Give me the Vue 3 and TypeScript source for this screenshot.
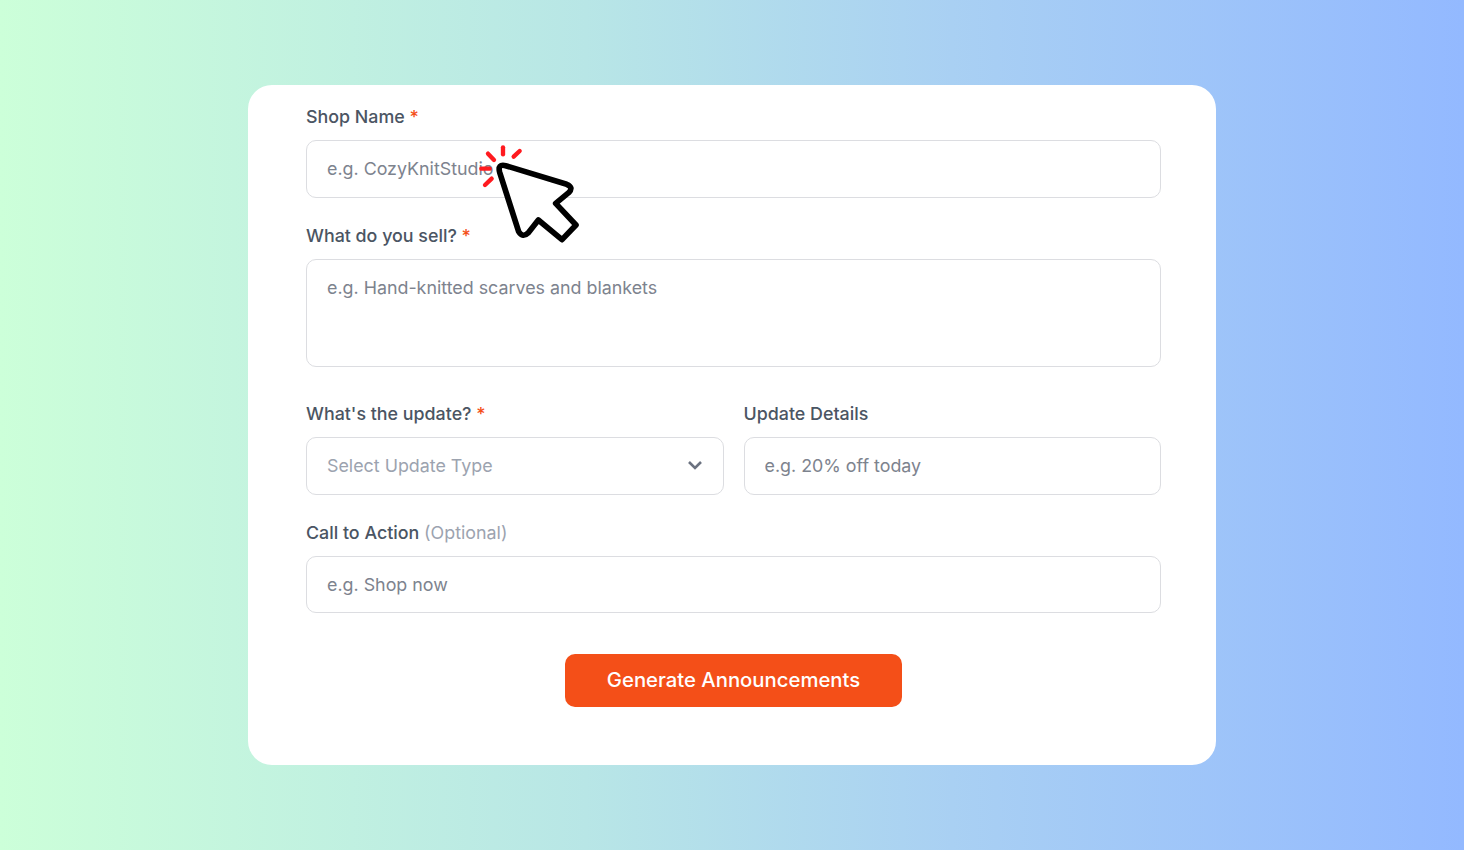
<script setup lang="ts">
const rays: [number, number, number, number][] = [
  [99, 37, 99, 58],
  [54, 56, 72, 75],
  [131, 65, 149, 48],
  [34, 101, 59, 101],
  [45, 150, 65, 131],
];
</script>

<template>
  <main class="page">
    <form class="card" @submit.prevent>
      <div class="field">
        <label class="label" for="shop">Shop Name <span class="req">*</span></label>
        <input id="shop" class="control shop" type="text" placeholder="e.g. CozyKnitStudio" />
      </div>
      <div class="field">
        <label class="label" for="sell">What do you sell? <span class="req">*</span></label>
        <textarea id="sell" class="control area" placeholder="e.g. Hand-knitted scarves and blankets"></textarea>
      </div>
      <div class="row">
        <div class="field">
          <label class="label" for="type">What's the update? <span class="req">*</span></label>
          <div class="select-wrap">
            <select id="type" class="control select">
              <option>Select Update Type</option>
            </select>
            <svg class="chevron" viewBox="0 0 16 10" aria-hidden="true">
              <path d="M2 2l6 6 6-6" />
            </svg>
          </div>
        </div>
        <div class="field">
          <label class="label" for="details">Update Details</label>
          <input id="details" class="control" type="text" placeholder="e.g. 20% off today" />
        </div>
      </div>
      <div class="field">
        <label class="label" for="cta">Call to Action <span class="optional">(Optional)</span></label>
        <input id="cta" class="control" type="text" placeholder="e.g. Shop now" />
      </div>
      <div class="actions">
        <button class="submit" type="submit">Generate Announcements</button>
      </div>
      <svg class="pointer" viewBox="0 0 360 345" aria-hidden="true">
        <line
          v-for="(r, i) in rays"
          :key="i"
          class="ray"
          :x1="r[0]"
          :y1="r[1]"
          :x2="r[2]"
          :y2="r[3]"
        />
        <path
          class="arrow"
          d="M89 112 Q82 86 107 92 L290 148 Q312 157 296 173 L257 205 L318 270 L276 314 L205 255 L175 293 Q158 310 146 290 Z"
        />
      </svg>
    </form>
  </main>
</template>

<style scoped>
.page {
  min-height: 850px;
  display: flex;
  align-items: center;
  justify-content: center;
  background: linear-gradient(90deg, #ccffd9 0%, #b8e6e6 40%, #a9d0f3 65%, #93b9ff 100%);
  font-family: Inter, "Liberation Sans", sans-serif;
}
.card {
  position: relative;
  box-sizing: border-box;
  width: 968px;
  height: 680px;
  padding: 18.3px 55px 0 58px;
  background: #fff;
  border-radius: 24px;
  display: flex;
  flex-direction: column;
}
.field {
  display: flex;
  flex-direction: column;
  gap: 9px;
  margin-bottom: 24px;
  min-width: 0;
}
.label {
  font-size: 17.85px;
  line-height: 28px;
  font-weight: 500;
  color: #4b5563;
}
.req {
  color: #f44f18;
}
.optional {
  color: #9ca3af;
  font-weight: 400;
}
.control {
  box-sizing: border-box;
  width: 100%;
  height: 57.6px;
  padding: 0 20px;
  border: 1px solid #dcdde1;
  border-radius: 10px;
  background: #fff;
  font: 400 17.85px/28px Inter, "Liberation Sans", sans-serif;
  color: #6b7280;
  outline: none;
}
.control::placeholder {
  color: #7d838e;
  opacity: 1;
}
.shop {
  padding-bottom: 1px;
}
.area {
  height: 108.3px;
  padding: 14px 20px;
  resize: none;
  display: block;
}
.row {
  display: grid;
  grid-template-columns: 1fr 1fr;
  gap: 20px;
  margin-top: 9px;
}
.select-wrap {
  position: relative;
}
.select {
  appearance: none;
  color: #9ca3af;
}
.chevron {
  position: absolute;
  right: 21px;
  top: 23px;
  width: 16px;
  height: 10px;
  pointer-events: none;
}
.chevron path {
  fill: none;
  stroke: #6b7280;
  stroke-width: 2.6;
}
.actions {
  display: flex;
  justify-content: center;
  padding: 17px 0 0 0;
}
.submit {
  width: 337px;
  height: 53px;
  padding: 0 0 2px;
  border: none;
  border-radius: 10px;
  background: #f44f18;
  color: #fff;
  font: 550 20.3px/28px Inter, "Liberation Sans", sans-serif;
  cursor: pointer;
}
.pointer {
  position: absolute;
  left: 222px;
  top: 50px;
  width: 120px;
  height: 115px;
  pointer-events: none;
}
.ray {
  stroke: #ff1a1f;
  stroke-width: 13;
  stroke-linecap: round;
}
.arrow {
  fill: #fff;
  stroke: #000;
  stroke-width: 17;
  stroke-linejoin: round;
}
</style>
